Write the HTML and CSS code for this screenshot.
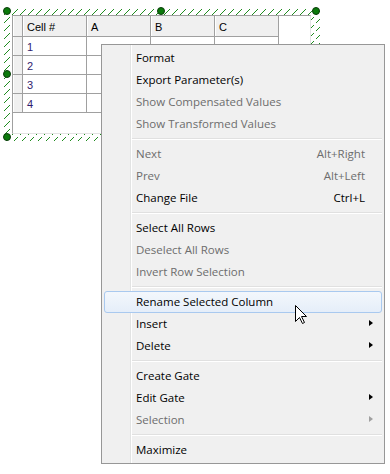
FILE: index.html
```html
<!DOCTYPE html>
<html>
<head>
<meta charset="utf-8">
<link rel="stylesheet" href="styles.css">
</head>
<body>
<div class="desk">
  <div class="frame">
    <svg class="hatch" width="317" height="134" shape-rendering="crispEdges" aria-hidden="true">
      <defs>
        <pattern id="hp" width="8" height="8" patternUnits="userSpaceOnUse">
          <g fill="#1f8c1f">
            <rect x="1" y="7" width="1" height="1"/>
            <rect x="2" y="6" width="1" height="1"/>
            <rect x="3" y="5" width="1" height="1"/>
            <rect x="4" y="4" width="1" height="1"/>
            <rect x="5" y="3" width="1" height="1"/>
            <rect x="6" y="2" width="1" height="1"/>
          </g>
        </pattern>
      </defs>
      <rect width="317" height="134" fill="url(#hp)"/>
    </svg>
    <div class="grid">
      <div class="rh hd"></div><div class="cell hd">Cell #</div><div class="cell hd">A</div><div class="cell hd">B</div><div class="cell hd">C</div>
      <div class="rh"></div><div class="cell num">1</div><div class="cell"></div><div class="cell"></div><div class="cell"></div>
      <div class="rh"></div><div class="cell num">2</div><div class="cell"></div><div class="cell"></div><div class="cell"></div>
      <div class="rh"></div><div class="cell num">3</div><div class="cell"></div><div class="cell"></div><div class="cell"></div>
      <div class="rh"></div><div class="cell num">4</div><div class="cell"></div><div class="cell"></div><div class="cell"></div>
    </div>
    <span class="handle h-tl"></span>
    <span class="handle h-tm"></span>
    <span class="handle h-tr"></span>
    <span class="handle h-ml"></span>
    <span class="handle h-bl"></span>
  </div>

  <div class="menu">
    <div class="item">Format</div>
    <div class="item">Export Parameter(s)</div>
    <div class="item dis">Show Compensated Values</div>
    <div class="item dis">Show Transformed Values</div>
    <div class="sep"></div>
    <div class="item dis"><span>Next</span><span class="key">Alt+Right</span></div>
    <div class="item dis"><span>Prev</span><span class="key">Alt+Left</span></div>
    <div class="item"><span>Change File</span><span class="key">Ctrl+L</span></div>
    <div class="sep"></div>
    <div class="item">Select All Rows</div>
    <div class="item dis">Deselect All Rows</div>
    <div class="item dis">Invert Row Selection</div>
    <div class="sep"></div>
    <div class="item hot">Rename Selected Column</div>
    <div class="item sub">Insert</div>
    <div class="item sub">Delete</div>
    <div class="sep"></div>
    <div class="item">Create Gate</div>
    <div class="item sub">Edit Gate</div>
    <div class="item sub dis">Selection</div>
    <div class="sep"></div>
    <div class="item">Maximize</div>
  </div>

  <svg class="cursor" width="13" height="20" viewBox="0 0 13 20" aria-hidden="true">
    <path d="M0.5 0.5 L0.5 16.5 L4.5 12.5 L7.5 18.5 L9.5 17.5 L6.5 11.5 L11.5 11.5 Z" fill="#fff" stroke="#000" stroke-width="1" stroke-linejoin="miter"/>
  </svg>
</div>
</body>
</html>
```

FILE: styles.css
```css
* { box-sizing: border-box; }
html, body { margin: 0; padding: 0; background: #fff; }
.desk {
  position: relative;
  width: 390px;
  height: 474px;
  overflow: hidden;
  padding: 7px 0 0 3px;
}
.frame {
  position: relative;
  width: 317px;
  height: 134px;
  padding: 8px 9px 7px 9px;
}
.hatch {
  position: absolute;
  left: 0;
  top: 0;
}
.grid {
  position: relative;
  height: 119px;
  background: #fff;
  border-top: 1px solid #a0a0a0;
  border-left: 1px solid #a0a0a0;
  border-right: 1px solid #e3e3e3;
  border-bottom: 1px solid #e3e3e3;
  display: grid;
  grid-template-columns: 10px 64px 64px 64px 64px;
  grid-template-rows: 21px 19px 19px 19px 19px;
  align-content: start;
  font-family: "Liberation Sans", Arial, sans-serif;
  font-size: 11px;
  color: #000;
}
.rh, .cell {
  border-right: 1px solid #a0a0a0;
  border-bottom: 1px solid #a0a0a0;
}
.rh { background: #f0f0f0; box-shadow: inset 1px 0 0 #fff; }
.hd { background: #f0f0f0; box-shadow: inset 1px 0 0 #fff; }
.cell {
  padding-left: 4px;
  padding-top: 1px;
  display: flex;
  align-items: center;
}
.num { color: #301c6e; }
.handle {
  position: absolute;
  width: 8px;
  height: 8px;
  border-radius: 50%;
  background: #0a7a0a;
  border: 1px solid #0b3d0b;
}
.h-tl { left: 0; top: 0; }
.h-tm { left: 154px; top: 0; }
.h-tr { left: 309px; top: 0; }
.h-ml { left: 0; top: 63px; }
.h-bl { left: 0; top: 126px; }

.menu {
  position: absolute;
  left: 101px;
  top: 44px;
  width: 284px;
  background: #f0f0f0;
  border: 1px solid #979797;
  padding: 2px;
  font-family: "Open Sans", "Noto Sans", sans-serif;
  font-size: 11.5px;
  color: #000;
}
.menu::before {
  content: "";
  position: absolute;
  left: 28px;
  top: 0;
  bottom: 0;
  width: 1px;
  background: #e2e3e3;
}
.menu::after {
  content: "";
  position: absolute;
  left: 29px;
  top: 0;
  bottom: 0;
  width: 1px;
  background: #fff;
}
.item {
  position: relative;
  z-index: 1;
  height: 22px;
  line-height: 21px;
  padding: 0 17px 0 32px;
  display: flex;
  justify-content: space-between;
  white-space: nowrap;
  border-radius: 3px;
}
.item.dis { color: #6d6d6d; }
.item.hot {
  border: 1px solid #a9c9ef;
  background: linear-gradient(#f3f7fc, #e5eef9);
  padding-left: 31px;
  line-height: 19px;
}
.sub::after {
  content: "";
  position: absolute;
  right: 9px;
  top: 7px;
  border-left: 4px solid #000;
  border-top: 3.5px solid transparent;
  border-bottom: 3.5px solid transparent;
}
.sub.dis::after { border-left-color: #a0a0a0; }
.sep {
  position: relative;
  z-index: 1;
  height: 8px;
  margin-left: 28px;
  padding-top: 3px;
}
.sep::before {
  content: "";
  display: block;
  height: 1px;
  background: #e0e0e0;
  border-bottom: 1px solid #fff;
  box-sizing: content-box;
}
.cursor {
  position: absolute;
  left: 295px;
  top: 305px;
  z-index: 5;
}
```
